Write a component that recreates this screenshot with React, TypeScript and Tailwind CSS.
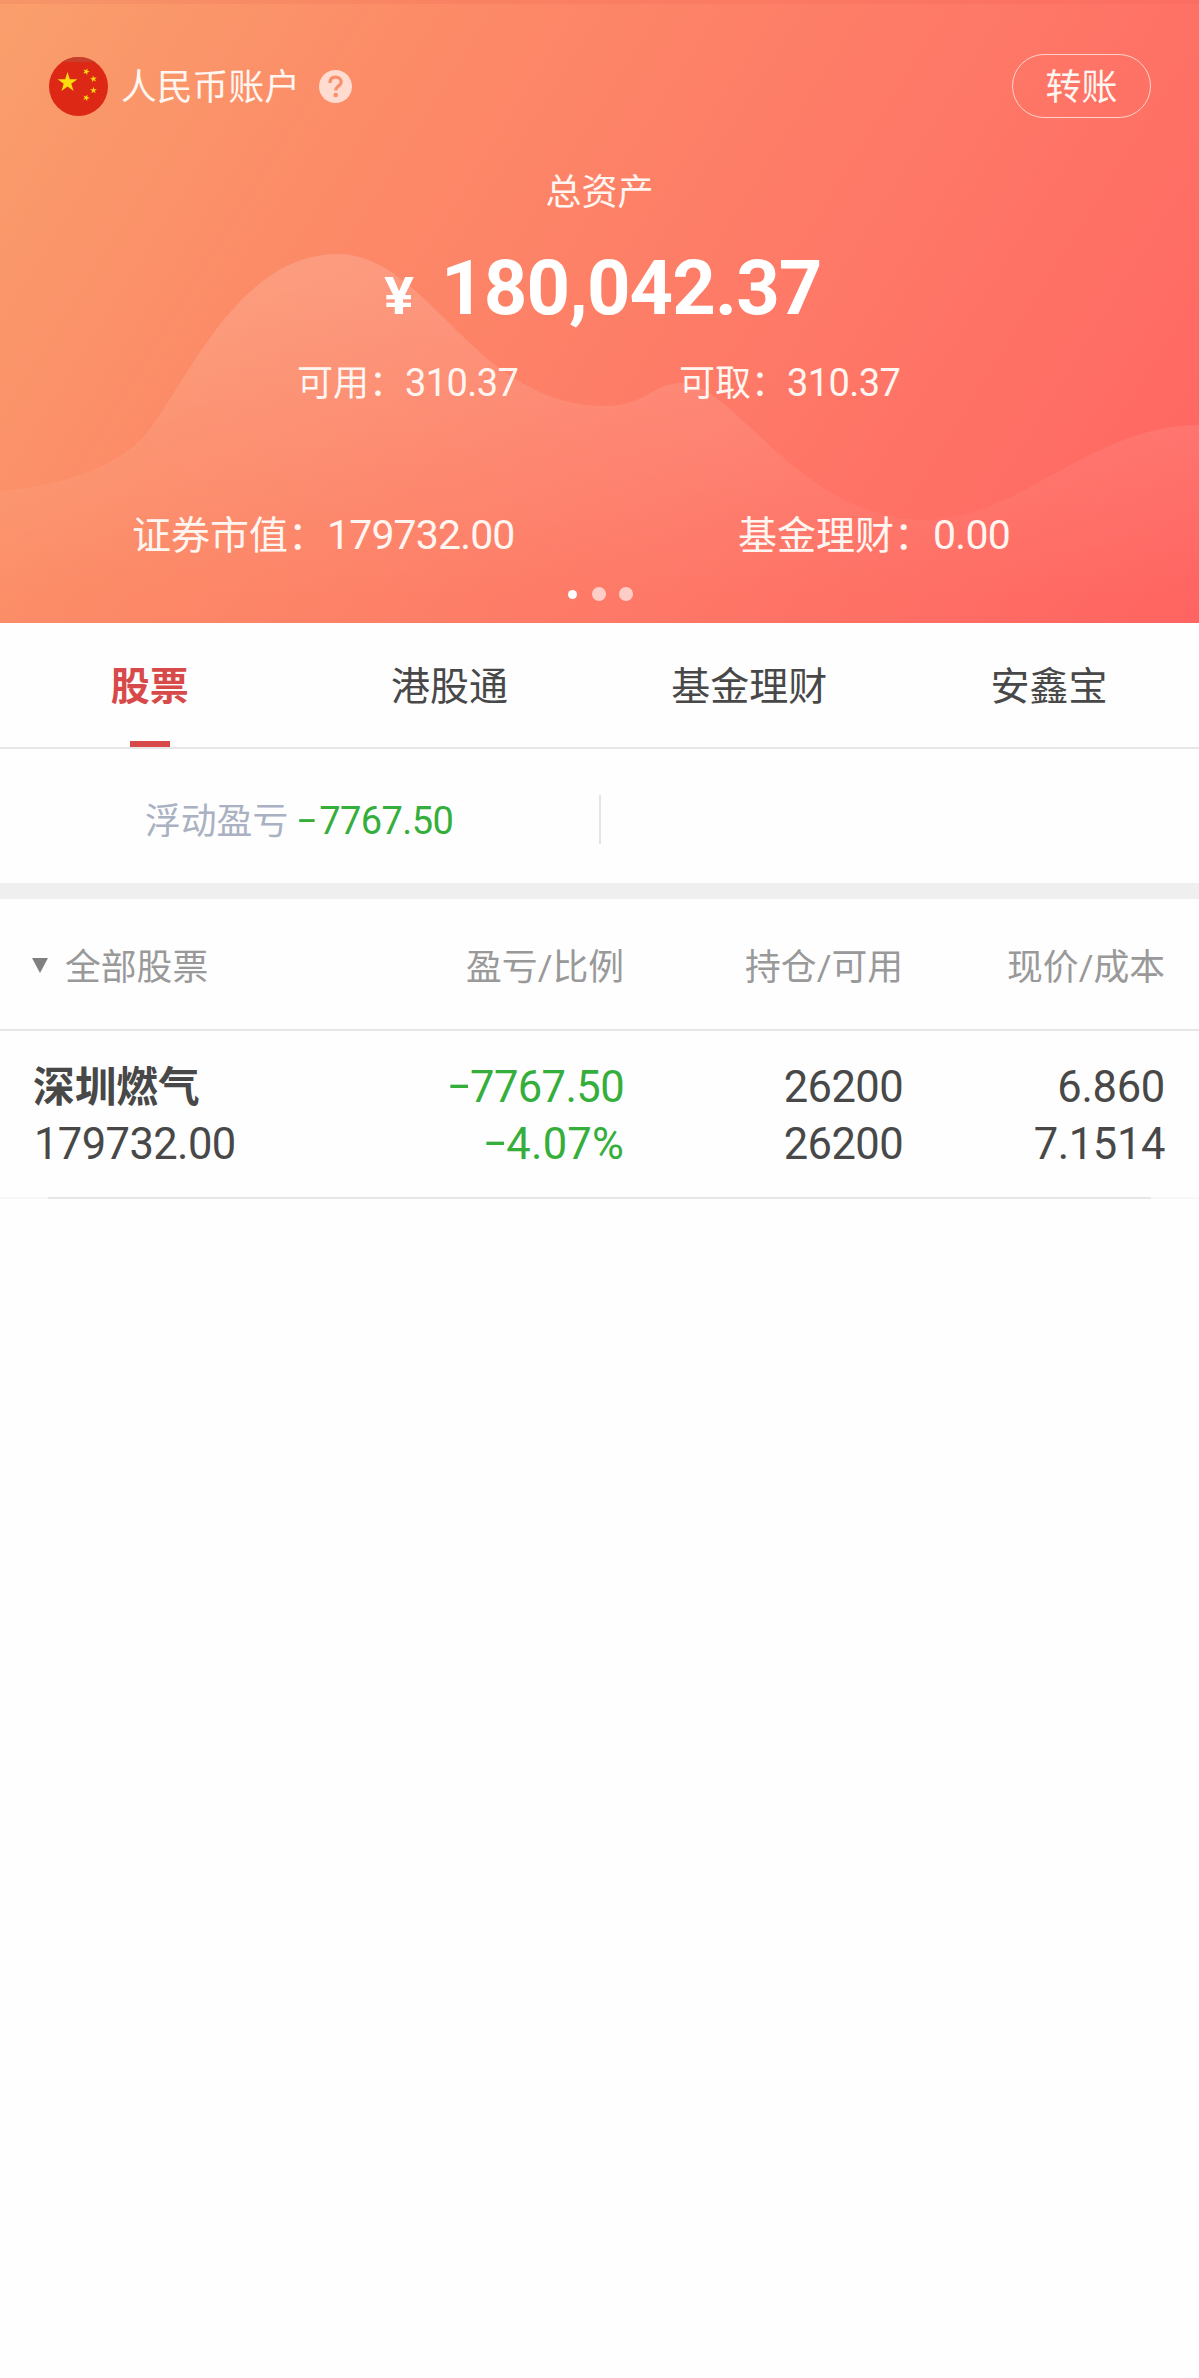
import React from 'react';

interface Holding {
  name: string;
  marketValue: string;
  profit: string;
  ratio: string;
  position: string;
  available: string;
  price: string;
  cost: string;
}

const tabs = ['股票', '港股通', '基金理财', '安鑫宝'];

const holdings: Holding[] = [
  {
    name: '深圳燃气',
    marketValue: '179732.00',
    profit: '7767.50',
    ratio: '4.07%',
    position: '26200',
    available: '26200',
    price: '6.860',
    cost: '7.1514',
  },
];

const STAR = '0,-10 2.25,-3.09 9.51,-3.09 3.63,1.18 5.88,8.09 0,3.82 -5.88,8.09 -3.63,1.18 -9.51,-3.09 -2.25,-3.09';

const FlagIcon: React.FC = () => (
  <svg viewBox="0 0 59 59" className="w-[59px] h-[59px]">
    <circle cx="29.5" cy="29.5" r="29.5" fill="#dc2814" />
    <path d="M13 5 A29.5 29.5 0 0 1 46 5 Z" fill="#c8402c" />
    <g fill="#fbdc0c">
      <polygon points={STAR} transform="translate(18.5 25.5) scale(1.04)" />
      <polygon points={STAR} transform="translate(37.2 14.6) rotate(20) scale(0.36)" />
      <polygon points={STAR} transform="translate(44.5 22) rotate(-10) scale(0.36)" />
      <polygon points={STAR} transform="translate(44.5 33.3) scale(0.36)" />
      <polygon points={STAR} transform="translate(37.2 40.8) rotate(20) scale(0.36)" />
    </g>
  </svg>
);

const HelpIcon: React.FC = () => (
  <svg viewBox="0 0 33 33" className="w-[33px] h-[33px]">
    <circle cx="16.5" cy="16.5" r="16.5" fill="#ffdbd0" />
    <path
      d="M11 13 C11 9 13.4 7.2 16.6 7.2 C19.9 7.2 22.2 9.2 22.2 12.2 C22.2 15.8 16.7 16 16.7 20.6"
      fill="none"
      stroke="#fa8f6c"
      strokeWidth="3.2"
    />
    <circle cx="16.7" cy="25" r="2.3" fill="#fa8f6c" />
  </svg>
);

const Minus: React.FC = () => (
  <span className="inline-block w-[19px] text-left">
    <span className="inline-block origin-left scale-x-[1.7] -translate-x-[2px] -translate-y-[2px]">-</span>
  </span>
);

const AssetCard: React.FC = () => (
  <header className="relative h-[623px] overflow-hidden bg-[linear-gradient(122deg,#f99f6c_0%,#fc8a67_29%,#fe7867_64%,#ff6461_100%)] text-[#fff6f2]">
    {/* Background wave */}
    <svg viewBox="0 0 1199 623" className="absolute inset-0 w-full h-full">
      <defs>
        <linearGradient id="wave" x1="0" y1="252" x2="0" y2="600" gradientUnits="userSpaceOnUse">
          <stop offset="0" stopColor="#fff" stopOpacity="0.16" />
          <stop offset="1" stopColor="#fff" stopOpacity="0" />
        </linearGradient>
      </defs>
      <path
        d="M0 491 C60 486 125 467 153 425 C195 364 245 254 338 254 C428 254 475 406 604 406 C645 406 655 383 681 383 C735 383 800 520 925 520 C1020 520 1090 425 1199 425 V623 H0 Z"
        fill="url(#wave)"
      />
    </svg>
    <div className="absolute inset-x-0 top-0 h-1 bg-[#e04040]/10"></div>

    <div className="relative flex flex-col h-full">
      <div className="flex items-center h-16 mt-[54px] pl-[49px] pr-12">
        <FlagIcon />
        <span className="ml-[13px] pt-[3px] text-[35.8px] leading-[64px]">人民币账户</span>
        <span className="ml-[19px]">
          <HelpIcon />
        </span>
        <button className="ml-auto w-[139px] h-16 pt-[4px] rounded-full border border-[#ffd3cb] text-[36px] leading-[58px]">
          转账
        </button>
      </div>

      <p className="mt-[51px] text-center text-[36px] leading-[48px]">总资产</p>
      <div className="flex items-baseline mt-[25px] pl-[384px] h-[92px] leading-[92px] font-bold text-white">
        <span className="inline-block w-[34px] origin-left scale-x-[1.1] text-[51px]">¥</span>
        <span className="ml-[23px] text-[76px] tracking-[-0.9px]">180,042.37</span>
      </div>

      <div className="flex h-[48px] mt-[25px] pl-[297px] leading-[48px] text-[36px]">
        <p className="w-[382px]">
          可用：<span className="text-[38px] tracking-[-0.6px]">310.37</span>
        </p>
        <p>
          可取：<span className="text-[38px] tracking-[-0.6px]">310.37</span>
        </p>
      </div>

      <div className="flex h-[52px] mt-[102px] pl-[132px] leading-[52px] text-[39px]">
        <p className="w-[606px]">
          证券市值：<span className="text-[41px] tracking-[-0.85px]">179732.00</span>
        </p>
        <p>
          基金理财：<span className="text-[41px] tracking-[-0.7px]">0.00</span>
        </p>
      </div>

      <div className="flex items-center justify-center mt-[26px] pl-[1px] h-[14px]">
        <span className="w-[9px] h-[9px] rounded-full bg-white"></span>
        <span className="ml-[15px] w-[14px] h-[14px] rounded-full bg-[#ffcdc8]"></span>
        <span className="ml-[13px] w-[14px] h-[14px] rounded-full bg-[#ffcdc8]"></span>
      </div>
    </div>
  </header>
);

const App: React.FC = () => {
  return (
    <div className="w-[1199px] min-h-[2378px] bg-[#fefefe] text-[#484848] whitespace-nowrap font-['Roboto','Noto_Sans_CJK_SC',sans-serif]">
      <AssetCard />

      {/* Tabs */}
      <nav className="grid grid-cols-4 h-[126px] border-b-2 border-[#e6e6e6] text-[39px] leading-[128px] text-center">
        {tabs.map((tab, i) => (
          <div
            key={tab}
            className={i === 0 ? 'relative h-[124px] font-bold text-[#d84a4a]' : 'h-[124px]'}
          >
            {tab}
            {i === 0 && (
              <span className="absolute left-1/2 bottom-0 w-10 h-[6px] -translate-x-1/2 bg-[#d84a4a]"></span>
            )}
          </div>
        ))}
      </nav>

      {/* Floating profit */}
      <section className="flex items-center h-[134px]">
        <div className="w-[599px] pl-[145px] pt-[10px] text-[35.8px] leading-[60px] text-[#a9b1c2]">
          浮动盈亏
          <span className="ml-[12px] text-[38px] tracking-[-0.6px] text-[#35ae3c]">
            <Minus />
            7767.50
          </span>
        </div>
        <div className="w-[2px] h-[49px] mt-[6px] bg-[#e4e4e4]"></div>
      </section>
      <div className="h-4 bg-[#efefef]"></div>

      {/* Holdings table */}
      <div className="grid grid-cols-[345px_279px_279px_262px] h-[132px] border-b-2 border-[#e6e6e6] text-[35.8px] leading-[138px] text-right text-[#999]">
        <div className="flex items-center h-[138px] pl-[32px]">
          <svg viewBox="0 0 16 15" className="w-4 h-[15px] mb-[6px]">
            <path d="M0 0 H16 L8 15 Z" fill="#808080" />
          </svg>
          <span className="ml-[17px]">全部股票</span>
        </div>
        <span>盈亏/比例</span>
        <span>持仓/可用</span>
        <span>现价/成本</span>
      </div>

      {holdings.map((item) => (
        <div key={item.name} className="h-[168px]">
          <div className="grid grid-cols-[345px_279px_279px_262px] h-[166px] pt-[28px] text-[43.5px] leading-[57px] tracking-[-0.6px] text-right">
            <div className="pl-[33px] text-left">
              <p className="h-[57px] text-[41.7px] font-bold tracking-normal">{item.name}</p>
              <p className="pl-[1px]">{item.marketValue}</p>
            </div>
            <div className="text-[#35ae3c]">
              <p>
                <Minus />
                {item.profit}
              </p>
              <p className="tracking-[0.2px]">
                <Minus />
                {item.ratio}
              </p>
            </div>
            <div>
              <p>{item.position}</p>
              <p>{item.available}</p>
            </div>
            <div>
              <p className="tracking-[-0.3px]">{item.price}</p>
              <p className="tracking-[-0.4px]">{item.cost}</p>
            </div>
          </div>
          <div className="h-[2px] px-12 bg-[#f8f8f8]">
            <div className="h-full bg-[#e6e6e6]"></div>
          </div>
        </div>
      ))}
    </div>
  );
};

export default App;
